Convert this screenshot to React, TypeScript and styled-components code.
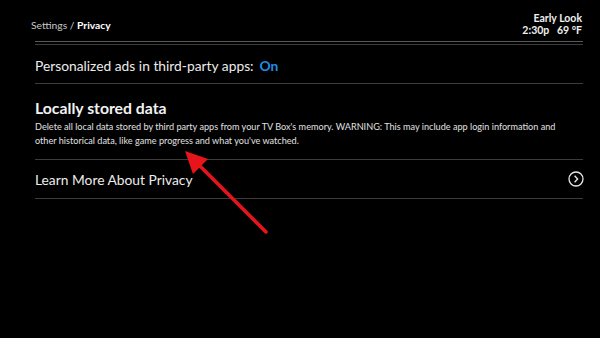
import React from "react";
import styled, { createGlobalStyle } from "styled-components";

const Global = createGlobalStyle`
  html, body { margin: 0; padding: 0; background: #000; }
  body { width: 600px; height: 338px; overflow: hidden; font-family: "Lato", "Open Sans", sans-serif; }
`;

const Screen = styled.div`
  position: relative;
  width: 600px;
  height: 338px;
  background: #000;
  color: #e6e6e6;
`;

const Header = styled.header`
  box-sizing: border-box;
  display: flex;
  justify-content: space-between;
  align-items: flex-start;
  padding: 12px 18px 0 31px;
  height: 41px;
`;

const Crumb = styled.div`
  margin-top: 6px;
  font-size: 10.3px;
  line-height: 14px;
  color: #c8c8c8;
  b { color: #fff; font-weight: 700; }
`;

const Status = styled.div`
  text-align: right;
  font-size: 10.5px;
  font-weight: 700;
  line-height: 12px;
  color: #f0f0f0;
  white-space: pre;
`;

const List = styled.div`
  margin: 0 17px 0 35px;
  display: flex;
  flex-direction: column;
`;

const HeaderRule = styled.div`
  height: 1px;
  background: #5a5a5a;
  margin-bottom: 2px;
`;

const Row = styled.div<{ $h: number; $top?: number }>`
  box-sizing: border-box;
  height: ${(p) => p.$h}px;
  border-top: 1px solid #3c3c3c;
  padding-top: ${(p) => p.$top ?? 0}px;
  display: flex;
  align-items: center;
  justify-content: space-between;
`;

const BlockRow = styled(Row)`
  align-items: flex-start;
`;

const LastRule = styled.div`
  border-top: 1px solid #3c3c3c;
`;

const Label = styled.div`
  font-size: 13.8px;
  color: #ececec;
`;

const Value = styled.span`
  color: #1e8ee6;
  font-weight: 700;
  margin-left: 6px;
`;

const Block = styled.div`
  display: flex;
  flex-direction: column;
`;

const Title = styled.div`
  font-size: 15.8px;
  font-weight: 700;
  color: #f2f2f2;
  line-height: 20px;
`;

const Desc = styled.div`
  font-size: 9.15px;
  line-height: 13.5px;
  color: #e0e0e0;
  margin-top: 2px;
`;

const Arrow = styled.svg`
  position: absolute;
  left: 0;
  top: 0;
  pointer-events: none;
`;

export default function App() {
  return (
    <Screen>
      <Global />
      <Header>
        <Crumb>
          Settings / <b>Privacy</b>
        </Crumb>
        <Status>{"Early Look\n2:30p   69 °F"}</Status>
      </Header>
      <List>
        <HeaderRule />
        <Row $h={39} $top={2}>
          <Label>
            Personalized ads in third-party apps:<Value>On</Value>
          </Label>
        </Row>
        <BlockRow $h={76} $top={14}>
          <Block>
            <Title>Locally stored data</Title>
            <Desc>
              Delete all local data stored by third party apps from your TV Box's memory. WARNING: This may include app
              login information and
              <br />
              other historical data, like game progress and what you've watched.
            </Desc>
          </Block>
        </BlockRow>
        <Row $h={39}>
          <Label>Learn More About Privacy</Label>
          <svg width="16" height="16" viewBox="0 0 16 16" style={{ marginRight: -1 }}>
            <circle cx="8" cy="8" r="7" fill="none" stroke="#e6e6e6" strokeWidth="1.3" />
            <path d="M6.6 4.8 L9.6 8 L6.6 11.2" fill="none" stroke="#e6e6e6" strokeWidth="1.4" />
          </svg>
        </Row>
        <LastRule />
      </List>
      <Arrow width="600" height="338" viewBox="0 0 600 338">
        <line x1="266" y1="232" x2="196" y2="162" stroke="#e8141b" strokeWidth="3.5" strokeLinecap="round" />
        <polygon points="185,151 208,159 193,174" fill="#e8141b" />
      </Arrow>
    </Screen>
  );
}
